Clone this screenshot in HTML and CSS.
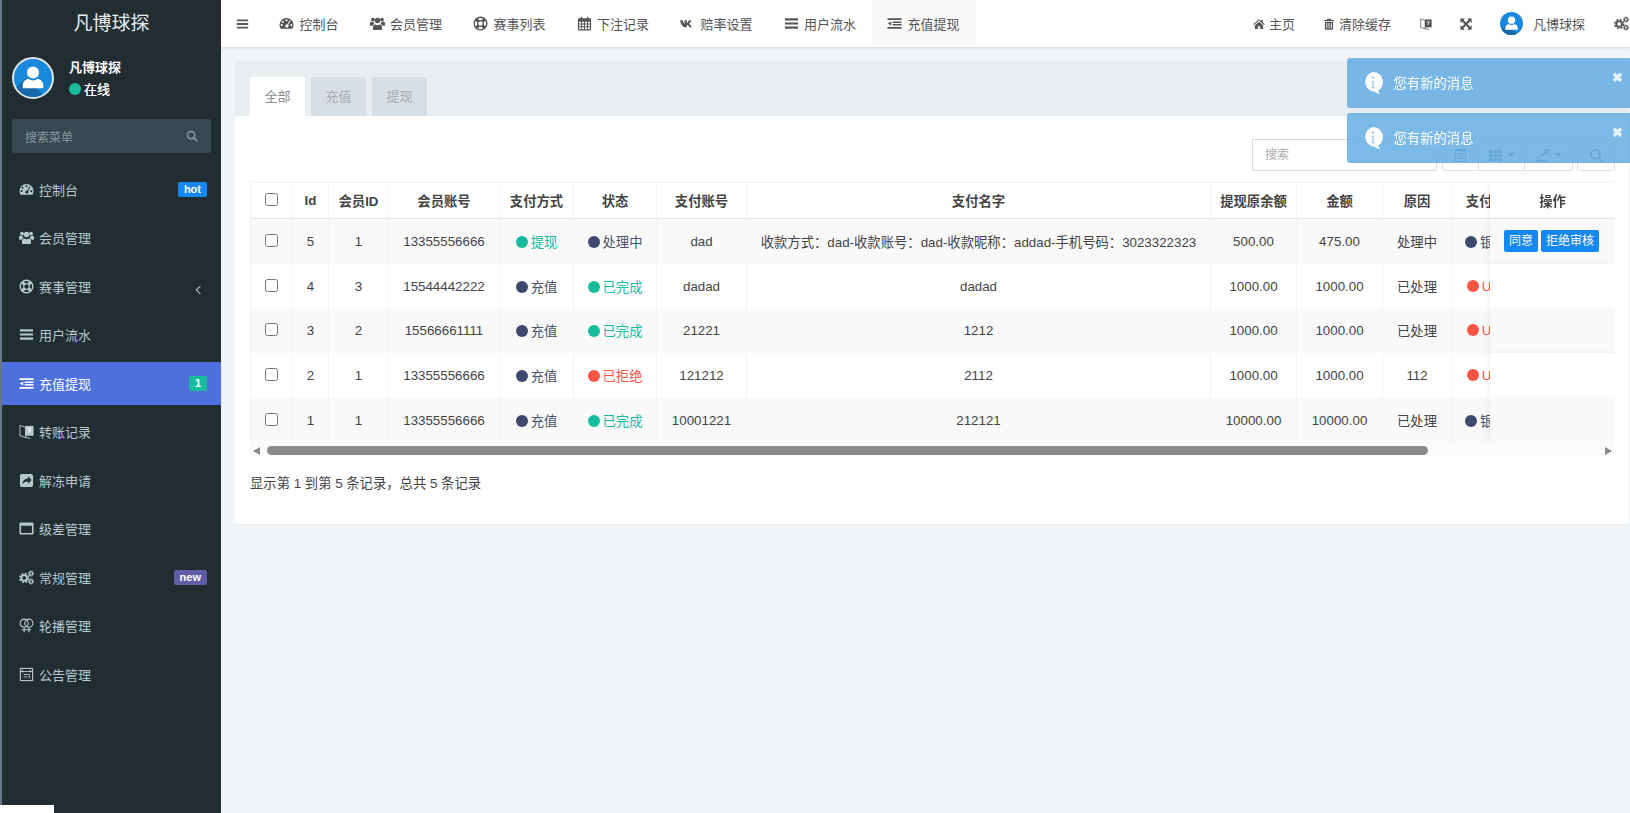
FILE: index.html
```html
<!DOCTYPE html>
<html lang="zh-CN">
<head>
    <meta charset="UTF-8">
    <meta name="viewport" content="width=device-width, initial-scale=1.0">
    <title>凡博球探</title>
    <link rel="stylesheet" href="styles.css">
</head>
<body>
    <svg class="sprite" xmlns="http://www.w3.org/2000/svg">
        <symbol id="i-dashboard" viewBox="0 0 16 16"><path fill-rule="evenodd" d="M8 2a7.500 7.500 0 0 0-7.500 7.500c0 1.600.5 3 1.300 4.200h12.400a7.500 7.500 0 0 0 1.300-4.200A7.500 7.500 0 0 0 8 2zM8 3.400a1.100 1.100 0 1 1 0 2.200 1.100 1.100 0 0 1 0-2.200zM3.900 5a1.100 1.100 0 1 1 0 2.200 1.100 1.100 0 0 1 0-2.200zM2.800 8.600a1.100 1.100 0 1 1 0 2.200 1.100 1.100 0 0 1 0-2.200zM13.200 8.600a1.100 1.100 0 1 1 0 2.200 1.100 1.100 0 0 1 0-2.200zM11.400 4.600l.9.5-2.500 4.600a1.700 1.700 0 1 1-3 .3 1.700 1.700 0 0 1 2.100-.9z"/></symbol>
        <symbol id="i-users" viewBox="0 0 16 16"><circle cx="3.200" cy="3.800" r="2"/><circle cx="12.800" cy="3.800" r="2"/><circle cx="8" cy="4.800" r="2.900"/><path d="M0 10V7.500c0-.8.500-1.400 1.300-1.400h2.200c.2 1 .7 1.900 1.400 2.500-1.100.3-1.900.9-2.300 1.800H.9c-.6 0-.9-.2-.9-.4zM16 10V7.500c0-.8-.5-1.400-1.300-1.400h-2.200c-.2 1-.7 1.900-1.400 2.500 1.100.3 1.900.9 2.300 1.800h1.700c.6 0 .9-.2.9-.4zM3.200 14.200v-2.400c0-1.600 1.100-2.700 2.500-2.700.7.500 1.400.8 2.300.8s1.600-.3 2.300-.8c1.400 0 2.500 1.100 2.500 2.700v2.400c0 .6-.5.8-1.100.8H4.300c-.6 0-1.100-.2-1.100-.8z"/></symbol>
        <symbol id="i-ring" viewBox="0 0 16 16"><g fill="none" stroke="currentColor"><circle cx="8" cy="8" r="6.700" stroke-width="1.500"/><circle cx="8" cy="8" r="3" stroke-width="1.300"/><path stroke-width="3.200" d="M3.300 3.300l2.600 2.600M12.700 3.300l-2.600 2.600M3.300 12.700l2.600-2.600M12.700 12.700l-2.600-2.600"/></g></symbol>
        <symbol id="i-calendar" viewBox="0 0 16 16"><path fill-rule="evenodd" d="M4 .8h1.500v1.700h5V.8H12v1.700h2c.6 0 1 .4 1 1v11c0 .6-.4 1-1 1H2c-.6 0-1-.4-1-1v-11c0-.6.4-1 1-1h2zM2.200 6v2h2.300V6zm3.300 0v2h2V6zm3 0v2h2.200V6zm3.200 0v2h2.100V6zM2.200 9v2h2.300V9zm3.300 0v2h2V9zm3 0v2h2.200V9zm3.200 0v2h2.100V9zM2.200 12v2h2.300v-2zm3.300 0v2h2v-2zm3 0v2h2.200v-2zm3.200 0v2h2.100v-2z"/></symbol>
        <symbol id="i-vk" viewBox="0 0 16 16"><path d="M.2 4.500h2.700c.3 1.500 1 3.200 1.900 3.700V4.500h2.500v3c1-.4 1.800-1.800 2.200-3h2.500c-.4 1.700-1.500 3.100-2.500 3.800 1 .6 2.300 1.800 3 3.700H10c-.5-1.300-1.500-2.400-2.700-2.600V12h-.9C3 12 .5 9 .2 4.500z"/></symbol>
        <symbol id="i-bars" viewBox="0 0 16 16"><path d="M1 2.500h14v2.200H1zM1 6.900h14v2.200H1zM1 11.300h14v2.200H1z"/></symbol>
        <symbol id="i-indent" viewBox="0 0 16 16"><path d="M.5 2.500h15v1.800H.5zM6 5.800h9.500v1.600H6zM6 8.600h9.500v1.600H6zM.5 11.700h15v1.800H.5zM4.500 5.800v4.400L.8 8z"/></symbol>
        <symbol id="i-home" viewBox="0 0 16 16"><path d="M8 1.500l3 2.600V2.500h2.200v3.500l2.500 2.200-.9 1L8 3.400 1.200 9.200l-.9-1zM2.500 9.800L8 5l5.500 4.800V14.500H9.500v-3.600h-3v3.600H2.500z"/></symbol>
        <symbol id="i-trash" viewBox="0 0 16 16"><path fill-rule="evenodd" d="M5.500 1h5l.8 1.500h3.200V4h-13V2.500h3.200zM2.500 5h11v9.300c0 .7-.5 1.200-1.200 1.200H3.700c-.7 0-1.200-.5-1.200-1.200zm2 1.500v7.500h1.200V6.500zm3 0v7.500h1.200V6.500zm3 0v7.500h1.200V6.500z"/></symbol>
        <symbol id="i-translate" viewBox="0 0 16 16"><path fill="none" stroke="currentColor" stroke-width="1" d="M1 1.500L7 3.500v11l-6-2zM7 14l5 1.500"/><path d="M6.500 2h9v10.500h-9z"/><path fill="#fff" d="M9 4.500h4v1h-.6c-.2 1.700-1.100 3-2.400 3.900l-.6-.8c.9-.6 1.700-1.600 1.900-3.100H9z"/></symbol>
        <symbol id="i-expand" viewBox="0 0 16 16"><path d="M.5.500h6L4.500 2.500 8 6l3.500-3.500-2-2h6v6l-2-2L10 8l3.500 3.500 2-2v6h-6l2-2L8 10l-3.500 3.500 2 2h-6v-6l2 2L6 8 2.500 4.500l-2 2z"/></symbol>
        <symbol id="i-cogs" viewBox="0 0 16 16"><g fill="none" stroke="currentColor"><circle cx="5.500" cy="8.500" r="3" stroke-width="2"/><circle cx="5.500" cy="8.500" r="4.700" stroke-width="1.600" stroke-dasharray="2.100 1.600"/><circle cx="12.800" cy="3.800" r="1.700" stroke-width="1.300"/><circle cx="12.800" cy="3.800" r="2.800" stroke-width="1" stroke-dasharray="1.400 1"/><circle cx="12.800" cy="12.200" r="1.700" stroke-width="1.300"/><circle cx="12.800" cy="12.200" r="2.800" stroke-width="1" stroke-dasharray="1.400 1"/></g></symbol>
        <symbol id="i-search" viewBox="0 0 16 16"><g fill="none" stroke="currentColor" stroke-width="2"><circle cx="6.800" cy="6.800" r="4.800"/><path stroke-linecap="round" d="M10.500 10.500l4 4"/></g></symbol>
        <symbol id="i-share" viewBox="0 0 16 16"><path fill-rule="evenodd" d="M3 1h10c1 0 2 1 2 2v10c0 1-1 2-2 2H3c-1 0-2-1-2-2V3c0-1 1-2 2-2zM9.500 3.500v2.300C6 6 3.800 8.200 3.800 12c1-1.900 3-2.900 5.700-2.800v2.300L13.500 7.500z"/></symbol>
        <symbol id="i-window" viewBox="0 0 16 16"><path fill-rule="evenodd" d="M1.800 1.500h12.400c.7 0 1.300.6 1.300 1.300v10.400c0 .7-.6 1.300-1.300 1.300H1.800c-.7 0-1.300-.6-1.300-1.300V2.800c0-.7.6-1.300 1.300-1.300zM2.200 5v7.800h11.600V5z"/></symbol>
        <symbol id="i-venus" viewBox="0 0 16 16"><g fill="none" stroke="currentColor" stroke-width="1.200"><circle cx="5.500" cy="5.500" r="4.300"/><circle cx="10.500" cy="5.500" r="4.300"/><path d="M5.500 9.800v5.500M10.500 9.800v5.500M3 12.500h5M8 12.500h5"/></g></symbol>
        <symbol id="i-news" viewBox="0 0 16 16"><g fill="none" stroke="currentColor"><rect x="1.500" y="1.500" width="13" height="13" stroke-width="1.200"/><path stroke-width="1" d="M1.500 4.800h13M4 3v3M12 3v3M5 8h6M5 10.500h4M11 8v4"/></g></symbol>
        <symbol id="i-th" viewBox="0 0 16 16"><path d="M1 2h4v3.400H1zM6 2h4v3.400H6zM11 2h4v3.400h-4zM1 6.300h4v3.400H1zM6 6.300h4v3.400H6zM11 6.300h4v3.400h-4zM1 10.600h4V14H1zM6 10.600h4V14H6zM11 10.600h4V14h-4z"/></symbol>
        <symbol id="i-table" viewBox="0 0 16 16"><path fill-rule="evenodd" d="M2 1h12v14H2zM3 3.500V14h10V3.500zM4.500 5.500h7v1h-7zM4.500 8h7v1h-7zM4.500 10.500h7v1h-7z"/></symbol>
        <symbol id="i-export" viewBox="0 0 16 16"><path d="M1 12.500h12V15H1z"/><path d="M9 1h6v6l-2.200-2.200L8 9.500 6.500 8l4.700-4.800z"/><path d="M7.500 6c-2 .8-3.500 2.500-4 5h1.500c.5-1.500 1.200-2.500 2.500-3.500z"/></symbol>
        <symbol id="i-user" viewBox="0 0 24 24"><circle cx="12" cy="8.500" r="3.800"/><path d="M5.500 18.500v-1.800c0-2.400 1.800-4 3.800-4 .8.500 1.700.8 2.700.8s1.900-.3 2.700-.8c2 0 3.800 1.600 3.800 4v1.800z"/></symbol>
        <symbol id="i-info" viewBox="0 0 22 24"><path fill-rule="evenodd" d="M11 1a10 10 0 0 1 5.200 18.500c.3 1.300 1 2.600 1.800 3.500-2-.3-4-1.300-5.300-2.600-.6.100-1.200.1-1.700.1A10 10 0 0 1 11 1zM11 5.500a1.100 1.100 0 1 0 0 2.200 1.100 1.100 0 0 0 0-2.200zM9.500 9.800v.7h1v6h-1v.7h3v-.7h-1v-6.700z"/></symbol>
    </svg>

    <aside class="sidebar">
        <div class="logo">凡博球探</div>
        <div class="user-panel">
            <span class="avatar avatar-large">
                <svg class="avatar-person"><use href="#i-user"/></svg>
            </span>
            <div class="user-info">
                <p class="user-name">凡博球探</p>
                <p class="user-state"><span class="dot dot-green"></span>在线</p>
            </div>
        </div>
        <div class="menu-search">
            <span>搜索菜单</span>
            <svg class="icon"><use href="#i-search"/></svg>
        </div>
        <ul class="menu">
            <li><svg class="icon"><use href="#i-dashboard"/></svg>控制台<span class="badge badge-blue">hot</span></li>
            <li><svg class="icon"><use href="#i-users"/></svg>会员管理</li>
            <li><svg class="icon"><use href="#i-ring"/></svg>赛事管理<span class="chevron"></span></li>
            <li><svg class="icon"><use href="#i-bars"/></svg>用户流水</li>
            <li class="active"><svg class="icon"><use href="#i-indent"/></svg>充值提现<span class="badge badge-green">1</span></li>
            <li><svg class="icon"><use href="#i-translate"/></svg>转账记录</li>
            <li><svg class="icon"><use href="#i-share"/></svg>解冻申请</li>
            <li><svg class="icon"><use href="#i-window"/></svg>级差管理</li>
            <li><svg class="icon"><use href="#i-cogs"/></svg>常规管理<span class="badge badge-purple">new</span></li>
            <li><svg class="icon"><use href="#i-venus"/></svg>轮播管理</li>
            <li><svg class="icon"><use href="#i-news"/></svg>公告管理</li>
        </ul>
        <div class="corner-patch"></div>
    </aside>

    <div class="main">
        <header class="navbar">
            <a class="nav-toggle"><svg class="icon"><use href="#i-bars"/></svg></a>
            <a class="nav-item"><svg class="icon"><use href="#i-dashboard"/></svg>控制台</a>
            <a class="nav-item"><svg class="icon"><use href="#i-users"/></svg>会员管理</a>
            <a class="nav-item"><svg class="icon"><use href="#i-ring"/></svg>赛事列表</a>
            <a class="nav-item"><svg class="icon"><use href="#i-calendar"/></svg>下注记录</a>
            <a class="nav-item"><svg class="icon"><use href="#i-vk"/></svg>赔率设置</a>
            <a class="nav-item"><svg class="icon"><use href="#i-bars"/></svg>用户流水</a>
            <a class="nav-item current"><svg class="icon"><use href="#i-indent"/></svg>充值提现</a>
            <div class="nav-right">
                <a class="nav-link"><svg class="icon"><use href="#i-home"/></svg>主页</a>
                <a class="nav-link nav-clear"><svg class="icon"><use href="#i-trash"/></svg>清除缓存</a>
                <a class="nav-link nav-icon-only"><svg class="icon"><use href="#i-translate"/></svg></a>
                <a class="nav-link nav-icon-only"><svg class="icon"><use href="#i-expand"/></svg></a>
                <a class="nav-link nav-user">
                    <span class="avatar avatar-small"><svg class="avatar-person"><use href="#i-user"/></svg></span>
                    凡博球探
                </a>
                <a class="nav-link nav-cogs"><svg class="icon"><use href="#i-cogs"/></svg></a>
            </div>
        </header>

        <section class="content">
            <div class="panel">
                <div class="panel-head">
                    <a class="tab active">全部</a>
                    <a class="tab">充值</a>
                    <a class="tab">提现</a>
                </div>
                <div class="panel-body">
                    <div class="toolbar">
                        <div class="search-input">搜索</div>
                        <div class="btn-group">
                            <span class="tool-btn tool-table"><svg class="icon"><use href="#i-table"/></svg></span>
                            <span class="tool-btn tool-columns"><svg class="icon"><use href="#i-th"/></svg><i class="caret"></i></span>
                            <span class="tool-btn tool-export"><svg class="icon"><use href="#i-export"/></svg><i class="caret"></i></span>
                        </div>
                        <span class="tool-btn tool-search"><svg class="icon"><use href="#i-search"/></svg></span>
                    </div>

                    <div class="table-wrap">
                        <table class="data-table">
                            <thead>
                                <tr>
                                    <th class="w-check"><input type="checkbox"></th>
                                    <th class="w-id">Id</th>
                                    <th class="w-member">会员ID</th>
                                    <th class="w-account">会员账号</th>
                                    <th class="w-type">支付方式</th>
                                    <th class="w-state">状态</th>
                                    <th class="w-payno">支付账号</th>
                                    <th class="w-payname">支付名字</th>
                                    <th class="w-amount">提现原余额</th>
                                    <th class="w-amount">金额</th>
                                    <th class="w-reason">原因</th>
                                    <th class="w-channel">支付方式</th>
                                    <th class="w-ops op-cell">操作</th>
                                </tr>
                            </thead>
                            <tbody>
                                <tr>
                                    <td><input type="checkbox"></td>
                                    <td>5</td>
                                    <td>1</td>
                                    <td>13355556666</td>
                                    <td class="text-green"><span class="dot dot-green"></span>提现</td>
                                    <td class="text-navy"><span class="dot dot-navy"></span>处理中</td>
                                    <td>dad</td>
                                    <td>收款方式：dad-收款账号：dad-收款昵称：addad-手机号码：3023322323</td>
                                    <td>500.00</td>
                                    <td>475.00</td>
                                    <td>处理中</td>
                                    <td class="text-navy"><span class="dot dot-navy"></span>银行卡</td>
                                    <td class="op-cell"><a class="btn-op">同意</a><a class="btn-op">拒绝审核</a></td>
                                </tr>
                                <tr>
                                    <td><input type="checkbox"></td>
                                    <td>4</td>
                                    <td>3</td>
                                    <td>15544442222</td>
                                    <td class="text-navy"><span class="dot dot-navy"></span>充值</td>
                                    <td class="text-green"><span class="dot dot-green"></span>已完成</td>
                                    <td>dadad</td>
                                    <td>dadad</td>
                                    <td>1000.00</td>
                                    <td>1000.00</td>
                                    <td>已处理</td>
                                    <td class="text-red"><span class="dot dot-red"></span>USDT</td>
                                    <td class="op-cell"></td>
                                </tr>
                                <tr>
                                    <td><input type="checkbox"></td>
                                    <td>3</td>
                                    <td>2</td>
                                    <td>15566661111</td>
                                    <td class="text-navy"><span class="dot dot-navy"></span>充值</td>
                                    <td class="text-green"><span class="dot dot-green"></span>已完成</td>
                                    <td>21221</td>
                                    <td>1212</td>
                                    <td>1000.00</td>
                                    <td>1000.00</td>
                                    <td>已处理</td>
                                    <td class="text-red"><span class="dot dot-red"></span>USDT</td>
                                    <td class="op-cell"></td>
                                </tr>
                                <tr>
                                    <td><input type="checkbox"></td>
                                    <td>2</td>
                                    <td>1</td>
                                    <td>13355556666</td>
                                    <td class="text-navy"><span class="dot dot-navy"></span>充值</td>
                                    <td class="text-red"><span class="dot dot-red"></span>已拒绝</td>
                                    <td>121212</td>
                                    <td>2112</td>
                                    <td>1000.00</td>
                                    <td>1000.00</td>
                                    <td>112</td>
                                    <td class="text-red"><span class="dot dot-red"></span>USDT</td>
                                    <td class="op-cell"></td>
                                </tr>
                                <tr>
                                    <td><input type="checkbox"></td>
                                    <td>1</td>
                                    <td>1</td>
                                    <td>13355556666</td>
                                    <td class="text-navy"><span class="dot dot-navy"></span>充值</td>
                                    <td class="text-green"><span class="dot dot-green"></span>已完成</td>
                                    <td>10001221</td>
                                    <td>212121</td>
                                    <td>10000.00</td>
                                    <td>10000.00</td>
                                    <td>已处理</td>
                                    <td class="text-navy"><span class="dot dot-navy"></span>银行卡</td>
                                    <td class="op-cell"></td>
                                </tr>
                            </tbody>
                        </table>
                    </div>
                    <div class="scrollbar">
                        <i class="arrow-left"></i>
                        <div class="scroll-track"><div class="scroll-thumb"></div></div>
                        <i class="arrow-right"></i>
                    </div>
                    <p class="table-info">显示第 1 到第 5 条记录，总共 5 条记录</p>
                </div>
            </div>
        </section>
    </div>

    <!-- 右上角消息提示 -->
    <div class="toast-box">
        <div class="toast">
            <svg class="toast-icon"><use href="#i-info"/></svg>
            <span>您有新的消息</span>
            <b class="toast-close">✖</b>
        </div>
        <div class="toast">
            <svg class="toast-icon"><use href="#i-info"/></svg>
            <span>您有新的消息</span>
            <b class="toast-close">✖</b>
        </div>
    </div>
</body>
</html>
```

FILE: styles.css
```css
/* Reset some default styles */
body, p, ul {
    margin: 0;
    padding: 0;
}

body {
    display: flex;
    height: 813px;
    overflow: hidden;
    font-family: "Liberation Sans", "Noto Sans CJK SC", sans-serif;
    font-size: 13px;
    color: #444;
    background-color: #f1f4f6;
}

.sprite {
    display: none;
}

.icon {
    width: 15px;
    height: 15px;
    fill: currentColor;
    flex: none;
}

/* Sidebar */
.sidebar {
    position: relative;
    flex: none;
    width: 219px;
    border-left: 2px solid #66778a;
    background-color: #222d32;
    color: #b8c7ce;
}

.logo {
    height: 47px;
    line-height: 47px;
    text-align: center;
    font-size: 19px;
    color: #e8eef0;
}

.user-panel {
    display: flex;
    align-items: center;
    height: 52px;
    padding: 6px 0 0 10px;
}

.avatar {
    display: block;
    position: relative;
    overflow: hidden;
    flex: none;
    border-radius: 50%;
    background-color: #1a88dc;
}

.avatar::before {
    content: "";
    position: absolute;
    left: 32%;
    top: 50%;
    width: 60%;
    height: 60%;
    background-color: #1668ab;
    transform: rotate(45deg);
    transform-origin: 0 0;
}

.avatar-large {
    width: 38px;
    height: 38px;
    margin-top: -2px;
    border: 2px solid #dfe6ea;
}

.avatar-small {
    width: 23px;
    height: 23px;
}

.avatar-person {
    position: relative;
    display: block;
    width: 100%;
    height: 100%;
    fill: #fff;
}

.user-info {
    margin-left: 15px;
    color: #fff;
    font-weight: bold;
}

.user-name {
    line-height: 20px;
}

.user-state {
    margin-top: 2px;
    line-height: 20px;
    font-weight: normal;
    text-shadow: 0 0 0 #fff;
}

.dot {
    display: inline-block;
    width: 12px;
    height: 12px;
    margin-right: 3px;
    border-radius: 50%;
    vertical-align: -1px;
}

.dot-green { background-color: #18bc9c; }
.dot-navy { background-color: #3d4a6d; }
.dot-red { background-color: #f75444; }

.text-green { color: #18bc9c; }
.text-navy { color: #4a5268; }
.text-red { color: #f75444; }

.menu-search {
    display: flex;
    align-items: center;
    justify-content: space-between;
    height: 34px;
    margin: 14px 10px 0;
    padding: 0 13px;
    border-radius: 3px;
    background-color: #374850;
    color: #8a99a1;
    font-size: 12px;
}

.menu-search .icon {
    width: 12px;
    height: 12px;
}

.menu {
    list-style: none;
    margin-top: 14.500px;
}

.menu li {
    display: flex;
    align-items: center;
    height: 43px;
    margin-bottom: 5.500px;
    padding: 0 14px 0 17px;
}

.menu li .icon {
    margin-right: 5px;
}

.menu li.active {
    background-color: #4d70dd;
    color: #fff;
}

.badge {
    margin-left: auto;
    padding: 0 6px;
    height: 15px;
    line-height: 15px;
    border-radius: 2px;
    font-size: 11px;
    font-weight: bold;
    color: #fff;
}

.badge-blue { background-color: #1688f1; }
.badge-green { background-color: #18bc9c; }
.badge-purple { background-color: #605ca8; }

.chevron {
    width: 5px;
    height: 5px;
    margin: 8px 4px 0 auto;
    border-left: 1px solid #b8c7ce;
    border-bottom: 1px solid #b8c7ce;
    transform: rotate(45deg);
}

.corner-patch {
    position: absolute;
    left: -2px;
    bottom: 0;
    width: 54px;
    height: 8px;
    background-color: #fff;
}

/* Top navigation */
.main {
    flex: 1;
    min-width: 0;
}

.navbar {
    display: flex;
    align-items: center;
    height: 47px;
    background-color: #fff;
    color: #555;
    box-shadow: 0 1px 3px rgba(0, 0, 0, 0.12);
}

.nav-toggle {
    display: flex;
    width: 43px;
    padding-left: 15px;
    box-sizing: border-box;
}

.nav-toggle .icon {
    width: 13px;
    height: 14px;
}

.nav-item {
    display: flex;
    align-items: center;
    height: 47px;
    padding: 0 16px 0 15px;
}

.nav-item .icon {
    margin-right: 5.500px;
}

.nav-item.current {
    background-color: #f9f9f9;
}

.nav-right {
    display: flex;
    align-items: center;
    margin-left: auto;
}

.nav-link {
    display: flex;
    align-items: center;
    padding: 0 15px;
}

.nav-link .icon {
    width: 12px;
    height: 12px;
    margin-right: 4px;
}

.nav-link.nav-clear {
    padding-left: 13px;
}

.nav-link.nav-icon-only {
    padding: 0 14px;
}

.nav-icon-only .icon {
    margin: 0;
}

.nav-user {
    padding: 0 14px;
}

.nav-user .avatar {
    margin-right: 10px;
}

.nav-link.nav-cogs {
    padding: 0 1px 0 15px;
}

.nav-cogs .icon {
    width: 15px;
    height: 15px;
    margin: 0;
}

/* Content */
.content {
    padding: 14px 1px 0 14px;
}

.panel {
    border-radius: 3px;
    background-color: #fff;
    box-shadow: 0 1px 1px rgba(0, 0, 0, 0.04);
}

.panel-head {
    display: flex;
    gap: 6px;
    height: 39px;
    padding: 16px 15px 0;
    background-color: #e8edf0;
}

.tab {
    width: 55px;
    line-height: 39px;
    text-align: center;
    border-radius: 2px 2px 0 0;
    background-color: #d8dee5;
    color: #a8adb2;
}

.tab.active {
    background-color: #fff;
    color: #8c8c8c;
}

.panel-body {
    padding: 23px 14px 30px 15px;
}

.toolbar {
    display: flex;
    justify-content: flex-end;
    height: 32px;
    margin-bottom: 10px;
}

.search-input {
    width: 171px;
    height: 30px;
    line-height: 30px;
    padding-left: 12px;
    margin-right: 5px;
    border: 1px solid #d8dce8;
    font-size: 12px;
    color: #aaa;
}

.btn-group {
    display: flex;
}

.tool-btn {
    display: flex;
    align-items: center;
    justify-content: center;
    box-sizing: border-box;
    height: 32px;
    border: 1px solid #dcdfe3;
    color: #65727f;
}

.tool-table {
    width: 37px;
    border-radius: 3px 0 0 3px;
}

.tool-columns {
    width: 46px;
    border-left: 0;
}

.tool-export {
    width: 48px;
    border-left: 0;
    border-radius: 0 3px 3px 0;
}

.tool-search {
    width: 38px;
    margin-left: 4px;
    border-radius: 3px;
}

.caret {
    margin-left: 4px;
    border-top: 4px solid #65727f;
    border-left: 4px solid transparent;
    border-right: 4px solid transparent;
}

/* Table */
.table-wrap {
    overflow: hidden;
}

.data-table {
    table-layout: fixed;
    width: 1409px;
    border-collapse: separate;
    border-spacing: 0;
    text-align: center;
    font-size: 13.330px;
}

.data-table th {
    box-sizing: border-box;
    height: 38px;
    padding: 0;
    border-top: 1px solid #f4f4f4;
    border-right: 1px solid #f4f4f4;
    border-bottom: 1px solid #e4e4e4;
    background-color: #fff;
    color: #444;
}

.data-table td {
    box-sizing: border-box;
    height: 44.800px;
    padding: 0;
    border-right: 1px solid #f4f4f4;
    background-color: #fff;
    white-space: nowrap;
}

.data-table tbody tr:nth-child(odd) td {
    background-color: #f9f9f9;
}

.data-table th:first-child,
.data-table td:first-child {
    border-left: 1px solid #f4f4f4;
}

.data-table input {
    display: block;
    width: 13px;
    height: 13px;
    margin: 0 0 2px 14px;
}

.w-check { width: 43px; }
.w-id { width: 36px; }
.w-member { width: 60px; }
.w-account { width: 111px; }
.w-type { width: 74px; }
.w-state { width: 83px; }
.w-payno { width: 90px; }
.w-payname { width: 464px; }
.w-amount { width: 86px; }
.w-reason { width: 69px; }
.w-channel { width: 82px; }
.w-ops { width: 125px; }

.data-table .op-cell {
    position: sticky;
    right: 0;
    border-right: 0;
    box-shadow: -3px 0 6px rgba(0, 0, 0, 0.05);
}

.data-table td.op-cell {
    padding: 0 0 0 14px;
    text-align: left;
}

.btn-op {
    display: inline-block;
    height: 22px;
    line-height: 22px;
    padding: 0 5px;
    margin-right: 3px;
    border-radius: 2px;
    background-color: #1688f1;
    color: #fff;
    font-size: 12px;
    vertical-align: 2px;
}

.scrollbar {
    display: flex;
    align-items: center;
    box-sizing: border-box;
    height: 14px;
    padding-top: 2px;
    background-color: #fbfbfb;
}

.arrow-left,
.arrow-right {
    flex: none;
    width: 0;
    height: 0;
    border-top: 4.500px solid transparent;
    border-bottom: 4.500px solid transparent;
}

.arrow-left {
    margin: 0 7px 0 3px;
    border-right: 7px solid #8a8a8a;
}

.arrow-right {
    margin: 0 3px 0 4px;
    border-left: 7px solid #8a8a8a;
}

.scroll-track {
    flex: 1;
}

.scroll-thumb {
    width: 1161px;
    height: 9px;
    border-radius: 5px;
    background-color: #8a8a8a;
}

.table-info {
    margin-top: 17px;
    line-height: 20px;
    font-size: 13.330px;
}

/* Toast messages */
.toast-box {
    position: fixed;
    top: 58px;
    right: 0;
    width: 283.500px;
}

.toast {
    display: flex;
    align-items: center;
    position: relative;
    box-sizing: border-box;
    height: 49.500px;
    margin-bottom: 5.500px;
    padding: 0 0 0 15px;
    border-radius: 3px 0 0 3px;
    background-color: rgba(103, 175, 228, 0.87);
    font-size: 13.330px;
    color: #fff;
}

.toast-icon {
    width: 22px;
    height: 24px;
    margin-right: 10px;
    fill: #fff;
}

.toast-close {
    position: absolute;
    top: 12px;
    right: 7px;
    font-size: 13px;
    line-height: 16px;
    color: #e6f2fb;
}
```
